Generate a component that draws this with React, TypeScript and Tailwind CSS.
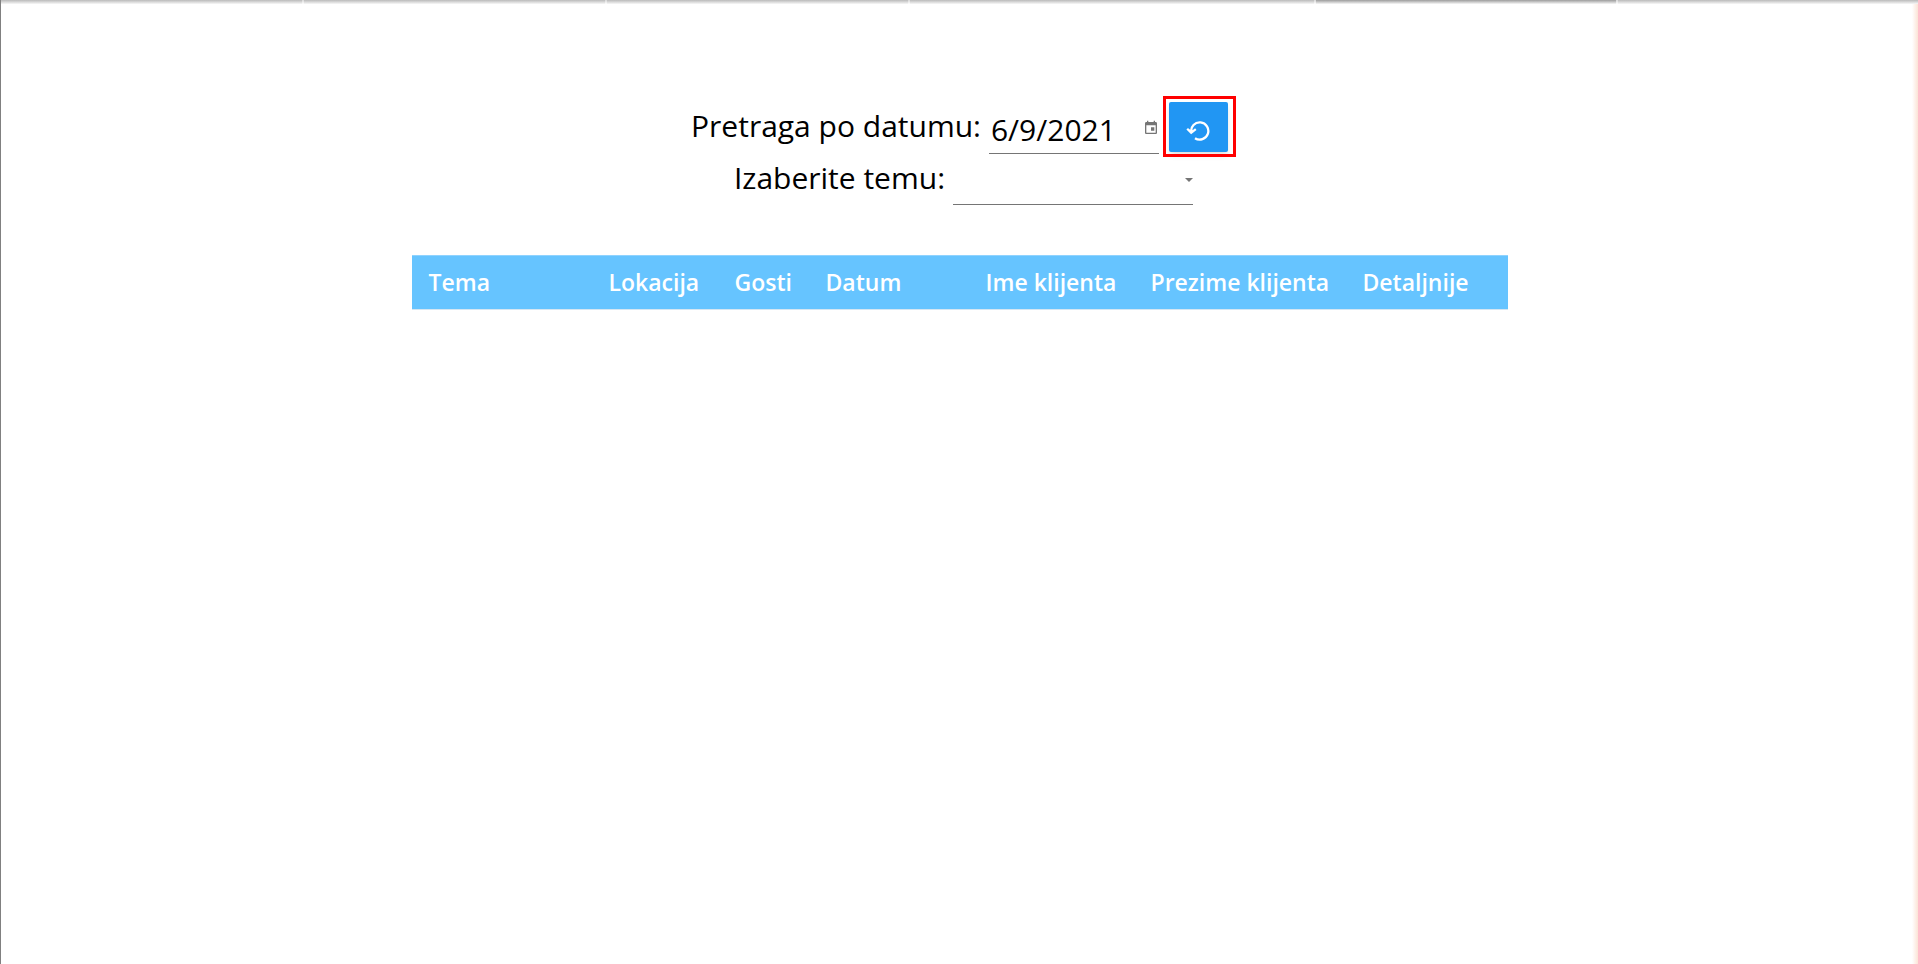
import { useState } from "react";

const columns = [
  { label: "Tema", width: "w-[180px]" },
  { label: "Lokacija", width: "w-[126px]" },
  { label: "Gosti", width: "w-[91px]" },
  { label: "Datum", width: "w-[160px]" },
  { label: "Ime klijenta", width: "w-[165px]" },
  { label: "Prezime klijenta", width: "w-[212px]" },
  { label: "Detaljnije", width: "w-[162px]" },
];

const strips = [
  { width: "w-[301px]", color: "from-[#bababa]" },
  { width: "w-[301px]", color: "from-[#bababa]" },
  { width: "w-[301px]", color: "from-[#bababa]" },
  { width: "w-[404px]", color: "from-[#bababa]" },
  { width: "w-[300px]", color: "from-[#9c9c9c]" },
  { width: "grow", color: "from-[#bababa]" },
];

function TopShadow() {
  return (
    <div className="flex h-1 gap-0.5 overflow-hidden bg-linear-to-b from-[#d8d8d8] to-[#fefefe]">
      {strips.map((strip, i) => (
        <div key={i} className={`${strip.width} ${strip.color} bg-linear-to-b to-[#f8f8f8]`} />
      ))}
    </div>
  );
}

function CalendarIcon() {
  return (
    <svg viewBox="0 0 24 24" className="size-4 fill-[#757575]" aria-hidden="true">
      <path d="M19 3h-1V1h-2v2H8V1H6v2H5c-1.11 0-1.99.9-1.99 2L3 19c0 1.1.89 2 2 2h14c1.1 0 2-.9 2-2V5c0-1.1-.9-2-2-2zm0 16H5V8h14v11zM12 11h5v5h-5z" />
    </svg>
  );
}

function ReloadIcon() {
  return (
    <svg
      viewBox="0 0 24 24"
      className="size-6"
      fill="none"
      stroke="white"
      strokeWidth="2.3"
      aria-hidden="true"
    >
      <path d="M5.2 13.2A8.6 8.6 0 1 1 9 19.2" />
      <path d="M1.2 9.8l4 4 4.6-3.6" />
      <path d="M2.2 10.3l3 .8 3.2.2-3 2.8z" fill="white" stroke="none" />
    </svg>
  );
}

export default function App() {
  const [date, setDate] = useState("6/9/2021");

  return (
    <div className="flex min-h-screen flex-col border-l border-[#808080] bg-white font-['Open_Sans','Noto_Sans',sans-serif] text-black">
      <TopShadow />
      <div className="flex grow flex-col bg-linear-to-l from-[#fbe3d6] to-white to-[6px]">
        <main className="flex flex-col items-center pt-[98px]">
          <div className="flex h-[52px] gap-2">
            <label htmlFor="date" className="text-[30px] leading-[47px]">
              Pretraga po datumu:
            </label>
            <div className="flex w-[170px] items-center border-b border-[#757575] pl-0.5">
              <input
                id="date"
                type="text"
                value={date}
                onChange={(e) => setDate(e.target.value)}
                className="min-w-0 grow bg-transparent pt-1 text-[30px] leading-[46px] outline-none"
              />
              <button type="button" aria-label="Kalendar">
                <CalendarIcon />
              </button>
            </div>
            <button
              type="button"
              aria-label="Poništi"
              onClick={() => setDate("")}
              className="relative ml-0.5 flex h-[50px] w-[59px] items-center justify-center rounded-xs bg-[#2196f3] pt-2 shadow-md"
            >
              <ReloadIcon />
              <span className="absolute -top-1.5 -right-2 -bottom-[5px] -left-1.5 border-3 border-[#ff0000]" />
            </button>
          </div>
          <div className="flex h-[51px] gap-2 pl-2">
            <label htmlFor="theme" className="text-[30px] leading-[47px]">
              Izaberite temu:
            </label>
            <div className="relative flex w-60 border-b border-[#757575]">
              <select id="theme" className="grow appearance-none bg-transparent text-[30px] outline-none">
                <option value="" />
              </select>
              <svg viewBox="0 0 8 4" className="pointer-events-none absolute top-6 right-0 h-1 w-2 fill-[#757575]" aria-hidden="true">
                <path d="M0 0h8L4 4z" />
              </svg>
            </div>
          </div>
          <table className="mt-[50px] table-fixed border-collapse bg-[#66c4ff] text-left text-[23px] text-white">
            <thead>
              <tr className="border-t border-b border-t-[#8fd3ff] border-b-[#d5e6f2]">
                {columns.map((column) => (
                  <th key={column.label} scope="col" className={`${column.width} py-[9px] pl-[17px] leading-[35px] font-semibold whitespace-nowrap`}>
                    {column.label}
                  </th>
                ))}
              </tr>
            </thead>
          </table>
        </main>
      </div>
    </div>
  );
}
